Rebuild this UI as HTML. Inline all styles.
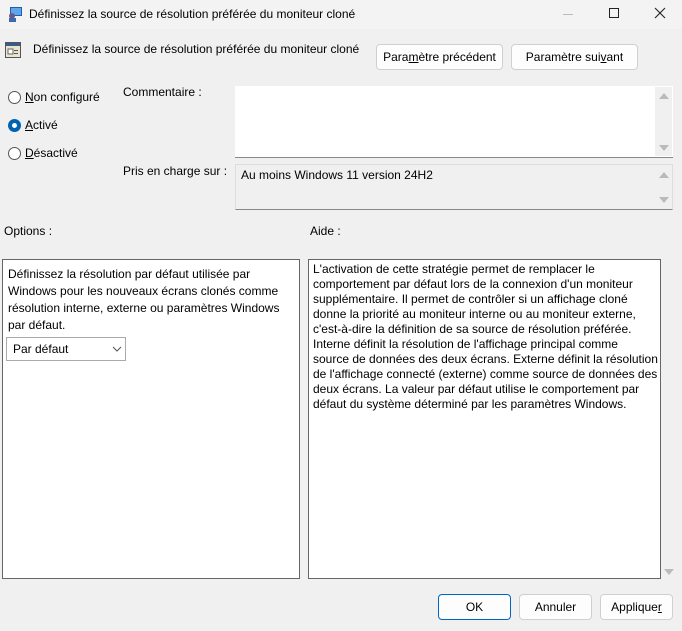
<!DOCTYPE html>
<html><head><meta charset="utf-8"><style>
*{margin:0;padding:0;box-sizing:border-box}
body{width:682px;height:631px;background:#f0f0f0;font-family:"Liberation Sans",sans-serif;font-size:12px;color:#000;position:relative;overflow:hidden}
.a{position:absolute;white-space:nowrap}
.btn{position:absolute;background:#fdfdfd;border:1px solid #d0d0d0;border-radius:4px;text-align:center;line-height:24px;font-size:12px}
.radio{position:absolute;width:13px;height:13px;border-radius:50%;border:1px solid #555;background:#fff}
.tri{position:absolute;width:0;height:0;border-left:5px solid transparent;border-right:5px solid transparent}
u{text-decoration:underline}
</style></head><body>
<div class="a" style="left:0;top:0;width:682px;height:29px;background:#f3f3f3"></div>
<svg class="a" style="left:7px;top:6px" width="16" height="16"><rect x="3" y="1" width="12" height="9" fill="#1e5fb0"/><rect x="4" y="2" width="10" height="7" fill="#5fa6e8"/><circle cx="5" cy="10" r="3" fill="#6a5a8a"/><rect x="2" y="12" width="7" height="4" fill="#3a6ab0"/></svg>
<div class="a" style="left:29px;top:7px">Définissez la source de résolution préférée du moniteur cloné</div>
<div class="a" style="left:563px;top:14px;width:10px;height:1px;background:#bbb"></div>
<div class="a" style="left:609px;top:8px;width:10px;height:10px;border:1px solid #222"></div>
<svg class="a" style="left:654px;top:7px" width="12" height="12"><path d="M1 1L11 11M11 1L1 11" stroke="#222" stroke-width="1.1"/></svg>
<svg class="a" style="left:5px;top:42px" width="16" height="16"><rect x="0.5" y="0.5" width="15" height="15" fill="#e8e4d0" stroke="#555"/><rect x="1" y="1" width="14" height="3" fill="#3a5a8a"/><rect x="3" y="7" width="5" height="5" fill="#fff" stroke="#666"/><rect x="9" y="8" width="4" height="1" fill="#555"/><rect x="9" y="11" width="4" height="1" fill="#555"/></svg>
<div class="a" style="left:33px;top:42px">Définissez la source de résolution préférée du moniteur cloné</div>
<div class="btn" style="left:376px;top:44px;width:127px;height:26px">Para<u>m</u>ètre précédent</div>
<div class="btn" style="left:511px;top:44px;width:127px;height:26px">Paramètre sui<u>v</u>ant</div>
<div class="radio" style="left:8px;top:91px"></div>
<div class="a" style="left:25px;top:90px"><u>N</u>on configuré</div>
<div class="radio" style="left:8px;top:119px;border:4px solid #0063b1"></div>
<div class="a" style="left:25px;top:118px"><u>A</u>ctivé</div>
<div class="radio" style="left:8px;top:147px"></div>
<div class="a" style="left:25px;top:146px"><u>D</u>ésactivé</div>
<div class="a" style="left:123px;top:85px">Commentaire :</div>
<div class="a" style="left:235px;top:86px;width:438px;height:72px;background:#fff;border-bottom:1px solid #888"></div>
<div class="a" style="left:655px;top:87px;width:17px;height:69px;background:#f0f0f0"></div>
<div class="tri" style="left:659px;top:93px;border-bottom:6px solid #bbb"></div>
<div class="tri" style="left:659px;top:145px;border-top:6px solid #bbb"></div>
<div class="a" style="left:123px;top:164px">Pris en charge sur :</div>
<div class="a" style="left:235px;top:164px;width:438px;height:46px;background:#f0f0f0;border:1px solid #ddd;border-bottom:1px solid #888"></div>
<div class="a" style="left:241px;top:168px">Au moins Windows 11 version 24H2</div>
<div class="tri" style="left:659px;top:172px;border-bottom:6px solid #bbb"></div>
<div class="tri" style="left:659px;top:197px;border-top:6px solid #bbb"></div>
<div class="a" style="left:4px;top:224px">Options :</div>
<div class="a" style="left:310px;top:224px">Aide :</div>
<div class="a" style="left:2px;top:259px;width:298px;height:320px;background:#fff;border:1px solid #666"></div>
<div class="a" style="left:8px;top:266px;line-height:17px;white-space:normal;width:290px">Définissez la résolution par défaut utilisée par Windows pour les nouveaux écrans clonés comme résolution interne, externe ou paramètres Windows par défaut.</div>
<div class="a" style="left:6px;top:337px;width:120px;height:24px;border:1px solid #aaa;background:#fff;padding:4px 6px">Par défaut</div>
<svg class="a" style="left:112px;top:346px" width="10" height="6"><path d="M1 1L5 5L9 1" stroke="#555" fill="none"/></svg>
<div class="a" style="left:308px;top:259px;width:353px;height:320px;background:#fff;border:1px solid #666"></div>
<div class="a" style="left:313px;top:262px;line-height:15px">L'activation de cette stratégie permet de remplacer le<br>comportement par défaut lors de la connexion d'un moniteur<br>supplémentaire. Il permet de contrôler si un affichage cloné<br>donne la priorité au moniteur interne ou au moniteur externe,<br>c'est-à-dire la définition de sa source de résolution préférée.<br>Interne définit la résolution de l'affichage principal comme<br>source de données des deux écrans. Externe définit la résolution<br>de l'affichage connecté (externe) comme source de données des<br>deux écrans. La valeur par défaut utilise le comportement par<br>défaut du système déterminé par les paramètres Windows.</div>
<div class="tri" style="left:664px;top:569px;border-top:6px solid #bbb"></div>
<div class="btn" style="left:438px;top:594px;width:73px;height:26px;border:1px solid #0067c0">OK</div>
<div class="btn" style="left:519px;top:594px;width:73px;height:26px">Annuler</div>
<div class="btn" style="left:600px;top:594px;width:73px;height:26px">Applique<u>r</u></div>
</body></html>
